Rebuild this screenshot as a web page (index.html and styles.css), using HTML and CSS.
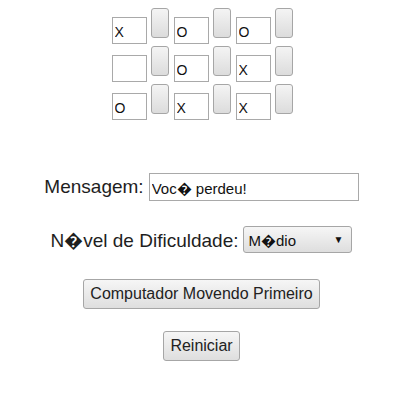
FILE: index.html
```html
<!DOCTYPE html>
<html>
<head>
<meta charset="utf-8">
<link rel="stylesheet" href="styles.css">
</head>
<body>
<div class="board">
  <div class="row">
    <div class="cell"><input class="field" value="X"><button class="pick"></button></div>
    <div class="cell"><input class="field" value="O"><button class="pick"></button></div>
    <div class="cell"><input class="field" value="O"><button class="pick"></button></div>
  </div>
  <div class="row">
    <div class="cell"><input class="field" value=""><button class="pick"></button></div>
    <div class="cell"><input class="field" value="O"><button class="pick"></button></div>
    <div class="cell"><input class="field" value="X"><button class="pick"></button></div>
  </div>
  <div class="row">
    <div class="cell"><input class="field" value="O"><button class="pick"></button></div>
    <div class="cell"><input class="field" value="X"><button class="pick"></button></div>
    <div class="cell"><input class="field" value="X"><button class="pick"></button></div>
  </div>
</div>
<div class="line msg">
  <span class="label">Mensagem:</span>
  <input class="message" value="Voc&#xFFFD; perdeu!">
</div>
<div class="line level">
  <span class="label">N&#xFFFD;vel de Dificuldade:</span>
  <div class="select"><span>M&#xFFFD;dio</span><span class="arrow">&#9660;</span></div>
</div>
<div class="line first">
  <button class="btn">Computador Movendo Primeiro</button>
</div>
<div class="line restart">
  <button class="btn">Reiniciar</button>
</div>
</body>
</html>
```
FILE: styles.css
```css
html, body {
  margin: 0;
  padding: 0;
  background: #fff;
}
body {
  padding-top: 8px;
  font-family: "Liberation Sans", Arial, sans-serif;
  color: #222;
}
.board {
  display: flex;
  flex-direction: column;
  align-items: center;
  gap: 2px;
  padding-left: 1px;
}
.row {
  display: flex;
  gap: 5px;
}
.cell {
  display: flex;
  align-items: flex-start;
  gap: 4px;
}
.field {
  box-sizing: border-box;
  width: 35px;
  height: 27px;
  margin: 9px 0 0 0;
  padding: 3px 1px 0 2px;
  border: 1px solid #a9a9a9;
  font-family: "Liberation Sans", Arial, sans-serif;
  font-size: 14px;
  color: #111;
  background: #fff;
  outline: none;
}
.pick {
  box-sizing: border-box;
  width: 18px;
  height: 30px;
  margin: 0;
  padding: 0;
  border: 1px solid #a6a6a6;
  border-radius: 3px;
  background: linear-gradient(#f4f4f4, #dcdcdc);
}
.line {
  display: flex;
  justify-content: center;
  align-items: center;
}
.label {
  font-size: 19px;
  color: #1e1e1e;
}
.msg {
  margin-top: 53px;
  gap: 5px;
}
.message {
  box-sizing: border-box;
  width: 210px;
  height: 28px;
  margin: 0;
  padding: 1px 2px 0;
  border: 1px solid #a9a9a9;
  font-family: "Liberation Sans", Arial, sans-serif;
  font-size: 15px;
  color: #111;
  outline: none;
}
.level {
  margin-top: 25px;
  gap: 5px;
}
.select {
  box-sizing: border-box;
  width: 109px;
  height: 27px;
  display: flex;
  justify-content: space-between;
  align-items: center;
  padding: 0 8px 0 4px;
  border: 1px solid #a6a6a6;
  border-radius: 3px;
  background: linear-gradient(#f6f6f6, #dedede);
  font-size: 15px;
  color: #111;
}
.arrow {
  font-size: 10px;
}
.btn {
  box-sizing: border-box;
  height: 30px;
  padding: 0 6px;
  border: 1px solid #a6a6a6;
  border-radius: 3px;
  background: linear-gradient(#f6f6f6, #dedede);
  font-family: "Liberation Sans", Arial, sans-serif;
  font-size: 16px;
  color: #222;
}
.first {
  margin-top: 26px;
}
.restart {
  margin-top: 22px;
}
```
